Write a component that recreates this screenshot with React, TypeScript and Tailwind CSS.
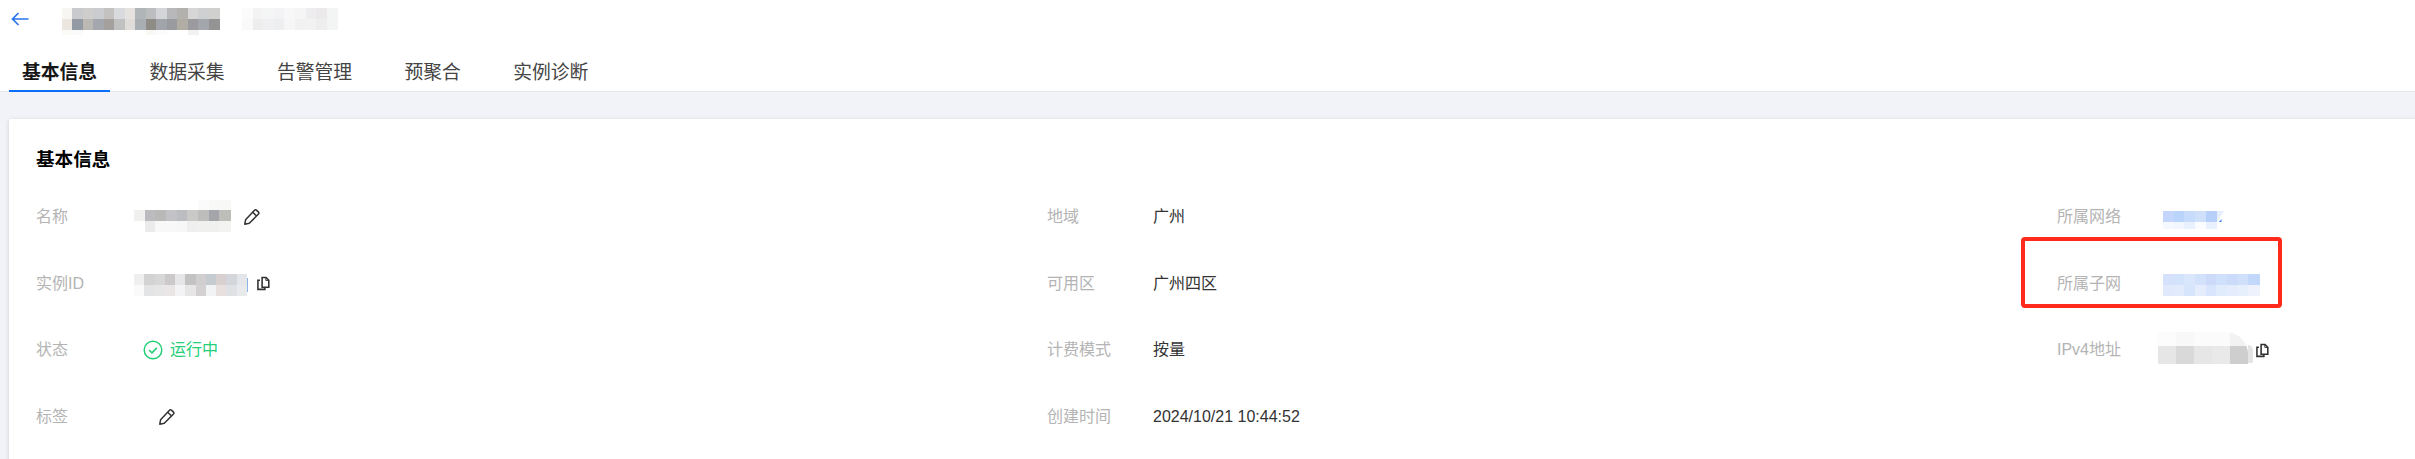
import React from "react";

type Row = { h: number; cells: (string | null)[] };

function Mosaic({ cell, rows, className }: { cell: number; rows: Row[]; className?: string }) {
  const w = Math.ceil(cell * Math.max(...rows.map((r) => r.cells.length)));
  const h = rows.reduce((a, r) => a + r.h, 0);
  let y = 0;
  return (
    <svg width={w} height={h} className={"block shrink-0 " + (className ?? "")} shapeRendering="crispEdges">
      {rows.map((r, i) => {
        const top = y;
        y += r.h;
        return r.cells.map((c, j) =>
          c ? <rect key={i + "-" + j} x={j * cell} y={top} width={cell + 0.5} height={r.h} fill={c} /> : null
        );
      })}
    </svg>
  );
}

function Pen({ className }: { className?: string }) {
  return (
    <svg width="18" height="18" viewBox="0 0 16 16" fill="none" stroke="#333" strokeWidth="1.35" strokeLinejoin="round" className={"shrink-0 " + (className ?? "")}>
      <path d="M1.6 14.4l.7-3.9L10.2 2a1.2 1.2 0 0 1 1.7-.1l1.9 1.8a1.2 1.2 0 0 1 0 1.7L5.6 13.5z" />
      <path d="M8.6 3.8l3.5 3.3" />
    </svg>
  );
}

function Copy({ className }: { className?: string }) {
  return (
    <svg width="13" height="15" viewBox="0 0 14 15" fill="none" stroke="#333" strokeWidth="1.7" className={"shrink-0 " + (className ?? "")}>
      <path d="M5.5 1h4.2l3 3v7.5H5.5z" />
      <path d="M9.5 1v3.2h3.2" strokeWidth="1" />
      <path d="M3.2 4H1v9.8h7.5v-1.6" />
    </svg>
  );
}

const titleA: Row[] = [
  { h: 11, cells: ["#f7f6f3", "#c8cacd", "#cfcecc", "#cacccf", "#c4c2c0", "#d9dadd", "#e6e2df", "#b0b6b8", "#bcbdbe", "#d4d5d8", "#b8b8ba", "#b2b1ae", "#d6d6d6", "#cfd0d2", "#d0d0cf"] },
  { h: 11, cells: ["#ebe6df", "#939aa3", "#bcb9b4", "#a4a7ad", "#a4a09e", "#c0c2c2", "#e0dcd9", "#a9aeb2", "#8f8c86", "#a1a4aa", "#9a9b9e", "#b1ada5", "#9b9b9f", "#a3a6ac", "#949494"] },
  { h: 5, cells: ["#fbfaf6", "#f8fafc", null, null, null, null, null, null, "#faf8f5", "#fcfcfc", null, null, "#f2f2f2"] },
];
const titleB: Row[] = [
  { h: 11, cells: ["#fbfbfb", "#f3f3f4", "#f4f5f5", "#f3f3f5", "#f7f7f7", "#f5f5f5", "#ededf0", "#ebe9ea", "#f3f5f5"] },
  { h: 11, cells: ["#f9f9f9", "#ededee", "#f0f0f2", "#edeef0", "#f6f6f6", "#f1f1f2", "#f2f2f3", "#efeeee", "#f3f4f4"] },
];
const nameM: Row[] = [
  { h: 10, cells: [null, null, null, null, null, null, "#fbfbfb", "#f8f8f7", "#f8f8f7"] },
  { h: 11, cells: ["#f0f0ef", "#bcbcc0", "#b9b9b8", "#c3c3c7", "#bcbdc3", "#c9c9c8", "#bdbdbb", "#a4a4ab", "#bdbdb9"] },
  { h: 11, cells: [null, "#ebebeb", "#f8f8f8", "#f8f8f8", "#f7f7f7", "#efefef", "#f0f0ef", "#f0f0ee", "#f3f3f1"] },
];
const idM: Row[] = [
  { h: 11, cells: ["#f0eff0", "#d3d3d4", "#d7d7d7", "#ccc9ca", "#e6e6e8", "#c3c3c4", "#d0cecf", "#c6cbcf", "#d8cfd0", "#d3d6db", "#e4e6ea"] },
  { h: 11, cells: ["#fafafa", "#e3e4e5", "#e6e6e6", "#e9e6e5", "#f3f3f5", "#e6e6e7", "#d3d1d2", "#f1f3f4", "#e8e0df", "#dfe1e4", "#e9eaec"] },
];
const vpcM: Row[] = [
  { h: 11, cells: ["#c4d6fb", "#b9d5fb", "#c7dbfa", "#cfe0fb", "#b6d0fa"] },
  { h: 7, cells: ["#f5f8fe", "#f2f6fe", "#e9f1fe", "#fbfcff", "#eaf1fe"] },
];
const subnetM: Row[] = [
  { h: 11, cells: ["#d6e1fb", "#d2e3fb", "#d9e6fb", "#d2e2fa", "#cdd9f9", "#cfe0fb", "#cbdcfb", "#d0e0fb", "#c2d8fb"] },
  { h: 11, cells: ["#e1eafc", "#e2ebfc", "#d6e5fc", "#e5edfc", "#d8e5fc", "#e0ebfc", "#e5edfc", "#e6effc", "#edf2fd"] },
];
const ipM: Row[] = [
  { h: 14, cells: ["#fcfcfc", "#f8f8f8", "#fbfbfb", "#fbfbfb", "#f2f2f2"] },
  { h: 18, cells: ["#e6e6e6", "#d9d9d9", "#e6e6e6", "#e9e9e9", "#cecece"] },
];

function Cell({ label, labelW, children }: { label: string; labelW: string; children?: React.ReactNode }) {
  return (
    <div className="flex h-[66.5px] items-center text-[16px]">
      <div className={"shrink-0 text-[#b4b4b4] " + labelW}>{label}</div>
      <div className="flex items-center text-[#333]">{children}</div>
    </div>
  );
}

export default function App() {
  return (
    <div className="relative h-[459px] w-[2415px] overflow-hidden bg-[#f2f3f8] font-['Liberation_Sans','Noto_Sans_CJK_SC',sans-serif]">
      <header className="h-[92px] border-b border-[#e6e7eb] bg-white">
        <div className="flex h-[40px] items-start">
          <svg width="18" height="14" viewBox="0 0 18 14" fill="none" stroke="#2b74ee" strokeWidth="1.7" className="ml-[11px] mt-[12px] shrink-0">
            <path d="M17.5 7H1.5M7.5 1L1.5 7l6 6" />
          </svg>
          <Mosaic cell={10.47} rows={titleA} className="ml-[33px] mt-[8px]" />
          <Mosaic cell={10.6} rows={titleB} className="ml-[22px] mt-[8px]" />
        </div>
        <nav className="flex h-[52px] gap-[26.4px] pl-[9px] text-[18.8px] leading-[26px] text-[#444]">
          <div className="h-[52px] border-b-[2px] border-[#0a6fff] px-[13px] pt-[20px] font-bold text-[#161616]">基本信息</div>
          <div className="px-[13px] pt-[20px]">数据采集</div>
          <div className="px-[13px] pt-[20px]">告警管理</div>
          <div className="px-[13px] pt-[20px]">预聚合</div>
          <div className="px-[13px] pt-[20px]">实例诊断</div>
        </nav>
      </header>

      <main className="ml-[9px] mt-[27px] h-[400px] bg-white pl-[27px] pt-[28px] shadow-[0_1px_4px_rgba(54,58,80,0.2)]">
        <h2 className="text-[18.6px] font-bold leading-[26px] text-[#000]">基本信息</h2>
        <div className="mt-[11px] grid grid-cols-[1011px_1010px_1fr]">
          <Cell label="名称" labelW="w-[98px]">
            <Mosaic cell={10.67} rows={nameM} className="-mt-[2px]" />
            <Pen className="ml-[12px]" />
          </Cell>
          <Cell label="地域" labelW="w-[106px]">广州</Cell>
          <Cell label="所属网络" labelW="w-[106px]">
            <Mosaic cell={10.67} rows={vpcM} className="mt-[6px]" />
            <svg width="8" height="18" viewBox="0 0 8 18" className="mt-[6px] shrink-0">
              <path d="M0 0h7L0 11z" fill="#e6effd" />
              <path d="M2 11l2.5-3v3z" fill="#3b82f0" />
            </svg>
          </Cell>

          <Cell label="实例ID" labelW="w-[98px]">
            <Mosaic cell={10.27} rows={idM} className="mt-[3px]" />
            <span className="mt-[3px] h-[14px] w-[1px] bg-[#8fb3e6]" />
            <Copy className="ml-[9px]" />
          </Cell>
          <Cell label="可用区" labelW="w-[106px]">广州四区</Cell>
          <Cell label="所属子网" labelW="w-[106px]">
            <Mosaic cell={10.67} rows={subnetM} className="mt-[3px]" />
          </Cell>

          <Cell label="状态" labelW="w-[107px]">
            <svg width="20" height="20" viewBox="0 0 20 20" fill="none" stroke="#25cf78" className="shrink-0">
              <circle cx="10" cy="10" r="8.8" strokeWidth="1.5" />
              <path d="M6.2 10.2l2.8 2.7 4.8-5" strokeWidth="1.6" />
            </svg>
            <span className="ml-[7px] text-[#25cf78]">运行中</span>
          </Cell>
          <Cell label="计费模式" labelW="w-[106px]">按量</Cell>
          <Cell label="IPv4地址" labelW="w-[101px]">
            <Mosaic cell={18} rows={ipM} className="-mt-[5px] rounded-tr-[22px]" />
            <span className="mt-[8px] h-[18px] w-[5px] rounded-tr-[5px] bg-[#e4e4e4]" />
            <Copy className="ml-[3px]" />
          </Cell>

          <Cell label="标签" labelW="w-[122px]">
            <Pen />
          </Cell>
          <Cell label="创建时间" labelW="w-[106px]">2024/10/21 10:44:52</Cell>
          <div />
        </div>
      </main>

      <div className="absolute left-[2021px] top-[237px] h-[71px] w-[261px] rounded-[4px] border-[4px] border-[#ff2a1c]" />
    </div>
  );
}
